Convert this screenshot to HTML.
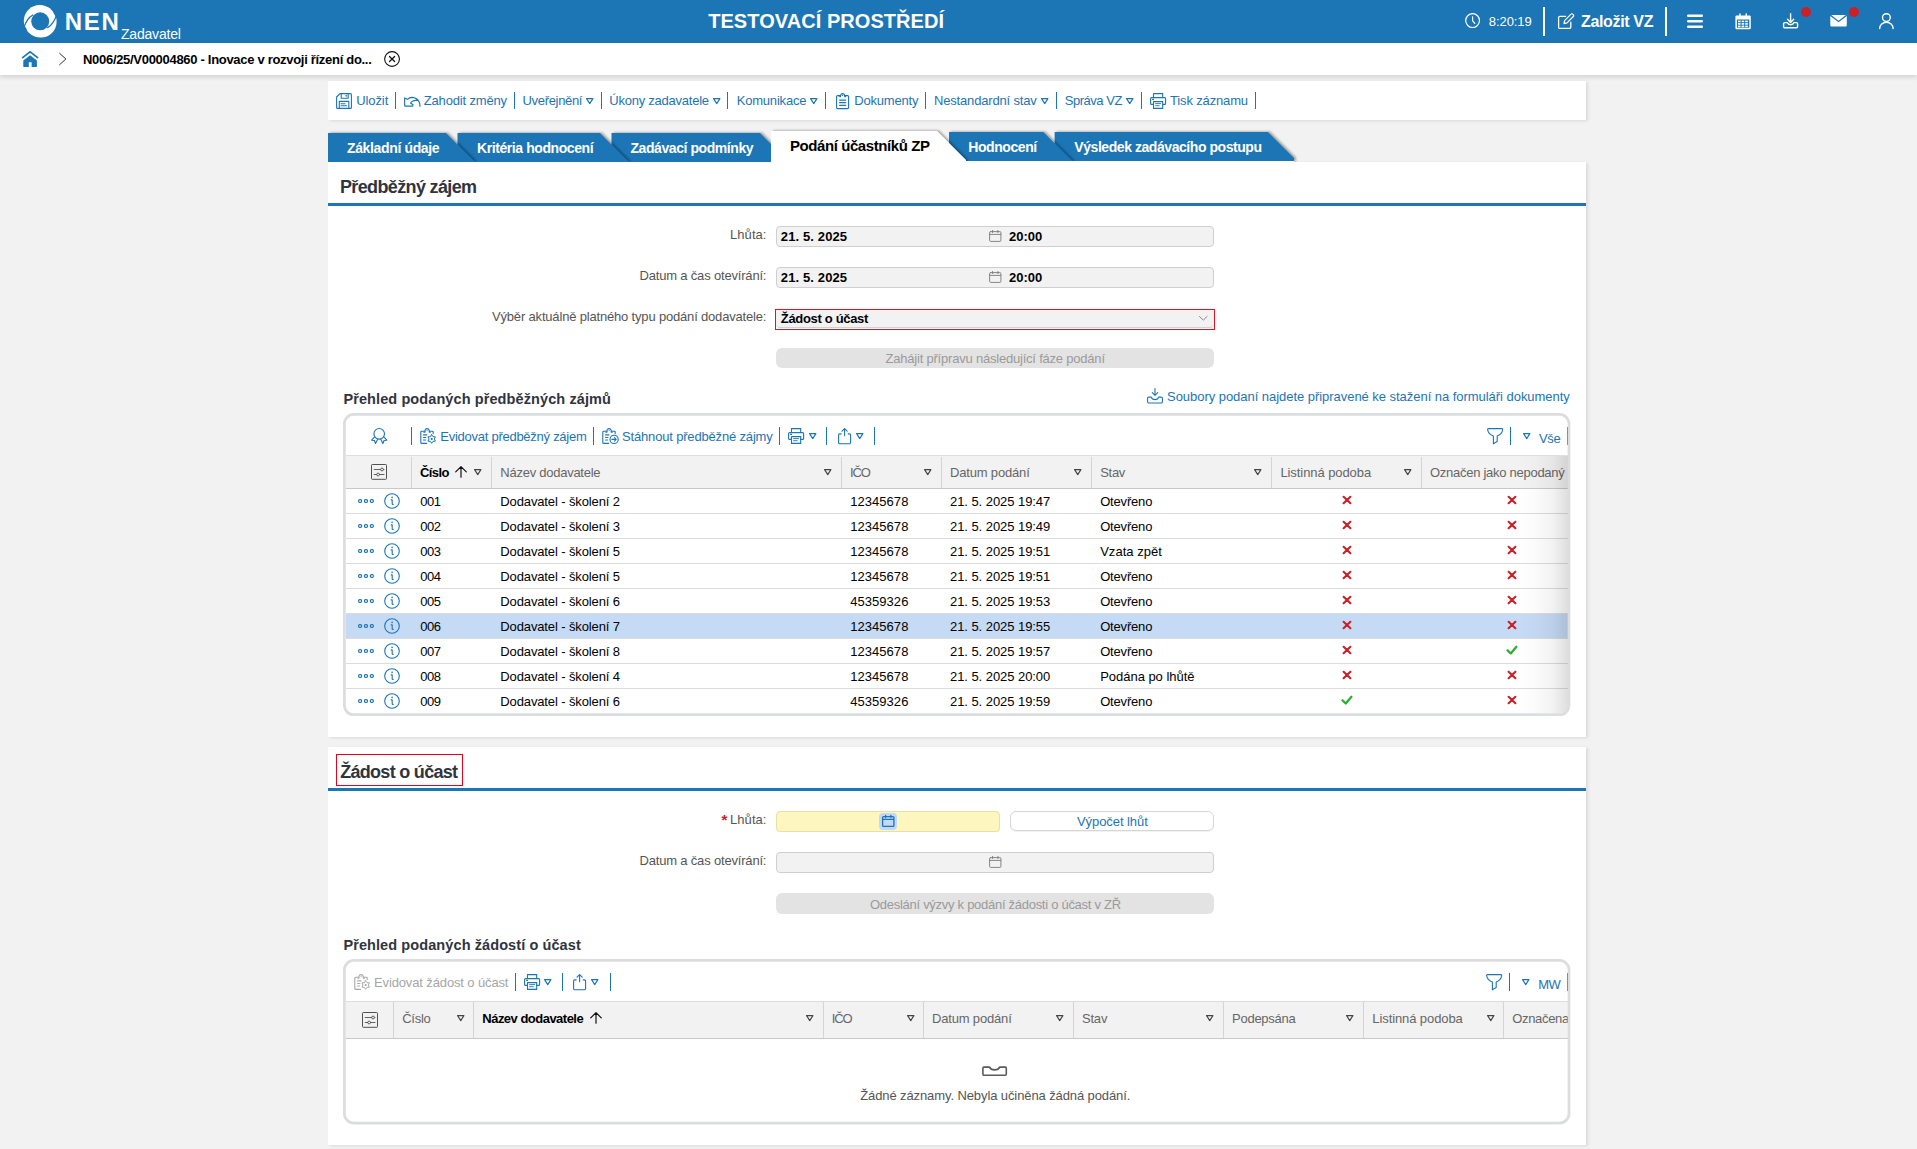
<!DOCTYPE html>
<html lang="cs"><head><meta charset="utf-8"><title>NEN - Zadavatel</title>
<style>
html,body{margin:0;padding:0}
body{width:1917px;height:1149px;overflow:hidden;background:#f2f2f2;font-family:"Liberation Sans", sans-serif;font-size:13px;position:relative}
div,.t,svg.i{position:absolute;box-sizing:border-box}
.t{white-space:nowrap;line-height:20px;height:20px;display:block;margin:0;padding:0;font-size:13px;font-weight:400;color:#000;text-decoration:none}
svg.i{overflow:visible}
.panel{background:#fff;box-shadow:2px 1px 3px rgba(0,0,0,.10)}
.sep{background:#1c75b4}
.fld{background:#f2f2f2;border:1px solid #cfcfcf;border-radius:4px}
.btnd{background:#e3e3e3;border-radius:6px}
.grid{border:3px solid #dcdddf;border-radius:11px;background:#fff;overflow:hidden}
.gh{background:#f2f2f2;border-top:1px solid #dedede;border-bottom:1px solid #c9c9c9}
.cs{background:#d4d4d4;width:1px}
.rl{background:#dcdcdc;height:1px}
</style></head>
<body>
<header>
<div class="hdr" style="left:0px;top:0px;width:1917px;height:43px;background:#1c75b4"></div>
<div class="crumb" style="left:0px;top:43px;width:1917px;height:32px;background:#fff;box-shadow:0 2px 5px rgba(0,0,0,.14)"></div>
<svg class="i" style="left:23.8px;top:4.7px;" width="33" height="33" viewBox="0 0 33 33"><circle cx="15.7" cy="15.9" r="15.9" fill="#fff"/><circle cx="16.7" cy="16.7" r="15.9" fill="#fff"/><circle cx="16.2" cy="16.3" r="9" fill="#1c75b4"/><path d="M-0.5 23.5 Q3.0 13.0 8.8 10.0" fill="none" stroke="#1c75b4" stroke-width="1.35" stroke-linecap="round" stroke-linejoin="round" /><path d="M-1 20.4 L1.0 21.4 L3.3 25.6 L-1 27 Z" fill="#1c75b4"/><g transform="rotate(180 16.2 16.3)"><path d="M-0.5 23.5 Q3.0 13.0 8.8 10.0" fill="none" stroke="#1c75b4" stroke-width="1.35" stroke-linecap="round" stroke-linejoin="round" /><path d="M-1 20.4 L1.0 21.4 L3.3 25.6 L-1 27 Z" fill="#1c75b4"/></g></svg>
<svg class="i" style="left:22px;top:50.8px;" width="17" height="17" viewBox="0 0 17 17"><path d="M0.6 6.6 L8.1 0.9 L15.6 6.6" fill="none" stroke="#1c75b4" stroke-width="1.7" stroke-linecap="round" stroke-linejoin="miter"/><path d="M8.1 4.2 L14.9 9.6 V15.4 a0.5 0.5 0 0 1 -0.5 0.5 H9.6 V11.2 H6.8 V15.9 H1.8 a0.5 0.5 0 0 1 -0.5 -0.5 V9.6 Z" fill="#1c75b4"/></svg>
<svg class="i" style="left:59px;top:53px;" width="8" height="12" viewBox="0 0 8 12"><path d="M0.6 0.3 L6.9 6 L0.6 11.7" fill="none" stroke="#333" stroke-width="1" stroke-linecap="round" stroke-linejoin="round" /></svg>
<svg class="i" style="left:383.8px;top:50.8px;" width="17" height="17" viewBox="0 0 17 17"><circle cx="8.05" cy="8" r="7.4" fill="none" stroke="#111" stroke-width="1.1"/><path d="M5.5 5.5 L10.6 10.5 M10.6 5.5 L5.5 10.5" fill="none" stroke="#111" stroke-width="1.25" stroke-linecap="round" stroke-linejoin="round" /></svg>
<svg class="i" style="left:1465px;top:12.9px;" width="16" height="16" viewBox="0 0 16 16"><circle cx="7.6" cy="7.6" r="6.9" fill="none" stroke="#fff" stroke-width="1.2"/><path d="M7.6 3.8 V7.8 L9.8 10.4" fill="none" stroke="#fff" stroke-width="1.2" stroke-linecap="round" stroke-linejoin="round" /></svg>
<svg class="i" style="left:1557.5px;top:12.5px;" width="17" height="17" viewBox="0 0 17 17"><path d="M7.5 3.4 H1.8 a1.2 1.2 0 0 0 -1.2 1.2 V14.2 a1.2 1.2 0 0 0 1.2 1.2 H11.6 a1.2 1.2 0 0 0 1.2 -1.2 V9.2" fill="none" stroke="#fff" stroke-width="1.3" stroke-linecap="round" stroke-linejoin="round" /><path d="M6 10.6 L6.6 7.6 L13 1.2 a1.2 1.2 0 0 1 1.8 0 L15.3 1.7 a1.2 1.2 0 0 1 0 1.8 L9 9.9 Z" fill="none" stroke="#fff" stroke-width="1.2" stroke-linecap="round" stroke-linejoin="round" /></svg>
<svg class="i" style="left:1687px;top:14px;" width="16" height="15" viewBox="0 0 16 15"><rect x="0" y="0.4" width="16" height="2.5" rx="1.2" fill="#fff"/><rect x="0" y="5.9" width="16" height="2.5" rx="1.2" fill="#fff"/><rect x="0" y="11.4" width="16" height="2.5" rx="1.2" fill="#fff"/></svg>
<svg class="i" style="left:1734.5px;top:12.5px;" width="17" height="17" viewBox="0 0 17 17"><path d="M1.6 2.6 H14.6 a1.2 1.2 0 0 1 1.2 1.2 V15 a1.2 1.2 0 0 1 -1.2 1.2 H1.6 A1.2 1.2 0 0 1 0.4 15 V3.8 A1.2 1.2 0 0 1 1.6 2.6 Z M1.9 6.6 V14.7 H14.3 V6.6 Z" fill="#fff" fill-rule="evenodd"/><rect x="4.2" y="0.2" width="1.5" height="4" rx="0.7" fill="#fff"/><rect x="10.5" y="0.2" width="1.5" height="4" rx="0.7" fill="#fff"/><rect x="3.0" y="7.6" width="2.6" height="1.6" fill="#fff"/><rect x="3.0" y="10.1" width="2.6" height="1.6" fill="#fff"/><rect x="3.0" y="12.6" width="2.6" height="1.6" fill="#fff"/><rect x="6.6" y="7.6" width="2.6" height="1.6" fill="#fff"/><rect x="6.6" y="10.1" width="2.6" height="1.6" fill="#fff"/><rect x="6.6" y="12.6" width="2.6" height="1.6" fill="#fff"/><rect x="10.2" y="7.6" width="2.6" height="1.6" fill="#fff"/><rect x="10.2" y="10.1" width="2.6" height="1.6" fill="#fff"/><rect x="10.2" y="12.6" width="2.6" height="1.6" fill="#fff"/></svg>
<svg class="i" style="left:1783px;top:13px;" width="16" height="16" viewBox="0 0 16 16"><path d="M7.6 0.7 V9.2 M4.5 6.3 L7.6 9.4 L10.7 6.3" fill="none" stroke="#fff" stroke-width="1.4" stroke-linecap="round" stroke-linejoin="round" /><path d="M1.8 9.6 H4.2 a3.6 3.2 0 0 0 6.8 0 H13.4 a1.2 1.2 0 0 1 1.2 1.2 V13.6 a1.2 1.2 0 0 1 -1.2 1.2 H1.8 a1.2 1.2 0 0 1 -1.2 -1.2 V10.8 a1.2 1.2 0 0 1 1.2 -1.2 Z" fill="none" stroke="#fff" stroke-width="1.4" stroke-linecap="round" stroke-linejoin="round" /></svg>
<div style="left:1800.7px;top:7px;width:10px;height:10px;background:#cb2026;border-radius:50%"></div>
<svg class="i" style="left:1829.7px;top:15px;" width="18" height="12" viewBox="0 0 18 12"><path d="M0.3 1 L8.55 7.2 L16.8 1 V10.3 a1.2 1.2 0 0 1 -1.2 1.2 H1.5 a1.2 1.2 0 0 1 -1.2 -1.2 Z" fill="#fff"/><path d="M1.2 0 H15.9 L8.55 5.7 Z" fill="#fff"/></svg>
<div style="left:1848.6px;top:7px;width:10px;height:10px;background:#cb2026;border-radius:50%"></div>
<svg class="i" style="left:1879px;top:13px;" width="16" height="17" viewBox="0 0 16 17"><circle cx="7.4" cy="4.6" r="3.9" fill="none" stroke="#fff" stroke-width="1.4"/><path d="M0.7 15.6 a6.7 6.4 0 0 1 13.4 0" fill="none" stroke="#fff" stroke-width="1.4" stroke-linecap="round" stroke-linejoin="round" /></svg>
<span class="t" style="left:64.80px;top:12px;font-size:24px;font-weight:700;color:#fff;letter-spacing:1.634px;">NEN</span>
<span class="t" style="left:121.00px;top:24px;font-size:14px;color:#fff;letter-spacing:-0.206px;">Zadavatel</span>
<h1 class="t" style="left:708.20px;top:11px;font-size:20px;font-weight:700;color:#fff;letter-spacing:0.053px;">TESTOVACÍ PROSTŘEDÍ</h1>
<span class="t" style="left:1488.75px;top:12px;color:#fff;letter-spacing:-0.058px;">8:20:19</span>
<div style="left:1543px;top:7px;width:2px;height:29px;background:#fff"></div>
<span class="t" style="left:1581.00px;top:12px;font-size:16px;font-weight:700;color:#fff;letter-spacing:-0.345px;">Založit VZ</span>
<div style="left:1665px;top:7px;width:2px;height:29px;background:#fff"></div>
<span class="t" style="left:83.00px;top:50px;font-weight:700;letter-spacing:-0.300px;">N006/25/V00004860 - Inovace v rozvoji řízení do...</span>
</header>
<main>
<nav class="toolbar">
<div class="panel" style="left:328px;top:81px;width:1258px;height:39px;"></div>
<svg class="i" style="left:336.2px;top:93px;" width="16" height="16" viewBox="0 0 16 16"><path d="M4 0.6 H14.4 a1 1 0 0 1 1 1 V14.4 a1 1 0 0 1 -1 1 H1.6 a1 1 0 0 1 -1 -1 V4 Z" fill="none" stroke="#1c75b4" stroke-width="1.1" stroke-linecap="round" stroke-linejoin="round" /><path d="M5.2 0.6 V5.2 H12.2 V0.6 M3.3 15.4 V8.4 H12.8 V15.4 M5 10.7 H9 M5 12.8 H10.6" fill="none" stroke="#1c75b4" stroke-width="1.1" stroke-linecap="round" stroke-linejoin="round" /><path d="M10.2 2.2 V3.3" fill="none" stroke="#1c75b4" stroke-width="1.1" stroke-linecap="round" stroke-linejoin="round" /></svg>
<svg class="i" style="left:403.7px;top:97px;" width="17" height="10" viewBox="0 0 17 10"><path d="M13.4 3.5 Q11 3.2 9 3.9 Q7.5 4.6 6.5 6 L9 7.65 L8.7 9.05 H1.3 Q0.66 9.05 0.66 8.4 V0.9 L3.44 2.36 Q5.5 0.5 7.9 0.4 Q13 0.6 15.2 5 Q16 7 16 9.3" fill="none" stroke="#1c75b4" stroke-width="1.15" stroke-linecap="round" stroke-linejoin="round" /></svg>
<svg class="i" style="left:835.8px;top:92.7px;" width="14" height="17" viewBox="0 0 14 17"><path d="M4.6 2.6 H1.6 a1 1 0 0 0 -1 1 V14.6 a1 1 0 0 0 1 1 H11.6 a1 1 0 0 0 1 -1 V3.6 a1 1 0 0 0 -1 -1 H8.6" fill="none" stroke="#1c75b4" stroke-width="1.1" stroke-linecap="round" stroke-linejoin="round" /><path d="M3.6 3.6 H4.6 Q4.4 0.6 6.6 0.6 Q8.8 0.6 8.6 3.6 H9.6" fill="none" stroke="#1c75b4" stroke-width="1.1" stroke-linecap="round" stroke-linejoin="round" /><circle cx="6.6" cy="2.4" r="0.6" fill="#1c75b4"/><path d="M3.6 7.1 H9.6 M3.6 9.7 H9.6 M3.6 12.3 H9.6" fill="none" stroke="#1c75b4" stroke-width="1.3" stroke-linecap="round" stroke-linejoin="round" stroke-linecap="butt"/></svg>
<svg class="i" style="left:1150px;top:93px;" width="16" height="16" viewBox="0 0 16 16"><path d="M3.5 4.6 V0.6 H12.7 V4.6" fill="none" stroke="#1c75b4" stroke-width="1.1" stroke-linecap="round" stroke-linejoin="round" /><path d="M3.5 11.4 H1.6 a1 1 0 0 1 -1 -1 V5.6 a1 1 0 0 1 1 -1 H14.6 a1 1 0 0 1 1 1 V10.4 a1 1 0 0 1 -1 1 H12.7" fill="none" stroke="#1c75b4" stroke-width="1.1" stroke-linecap="round" stroke-linejoin="round" /><path d="M3.5 8.6 H12.7 V15.4 H3.5 Z" fill="none" stroke="#1c75b4" stroke-width="1.1" stroke-linecap="round" stroke-linejoin="round" /><path d="M5.6 10.6 H10.6 M5.6 12.7 H9.2" fill="none" stroke="#1c75b4" stroke-width="0.9" stroke-linecap="round" stroke-linejoin="round" stroke-linecap="butt"/><path d="M2.6 6.4 H3.6" fill="none" stroke="#1c75b4" stroke-width="1.1" stroke-linecap="round" stroke-linejoin="round" /></svg>
<a class="t" style="left:356.25px;top:91px;color:#1c75b4;letter-spacing:-0.097px;">Uložit</a>
<div class="sep" style="left:395px;top:92px;width:1.2px;height:17px;"></div>
<a class="t" style="left:423.75px;top:91px;color:#1c75b4;letter-spacing:-0.165px;">Zahodit změny</a>
<div class="sep" style="left:514px;top:92px;width:1.2px;height:17px;"></div>
<a class="t" style="left:522.50px;top:91px;color:#1c75b4;letter-spacing:-0.322px;">Uveřejnění</a>
<svg class="i" style="left:585.7px;top:97.5px;" width="8" height="7" viewBox="0 0 8 7"><path d="M0.6 0.6 H6.9 L3.75 5.6 Z" fill="none" stroke="#1c75b4" stroke-width="1.15" stroke-linecap="round" stroke-linejoin="round" /></svg>
<div class="sep" style="left:601px;top:92px;width:1.2px;height:17px;"></div>
<a class="t" style="left:609.30px;top:91px;color:#1c75b4;letter-spacing:-0.238px;">Úkony zadavatele</a>
<svg class="i" style="left:712.7px;top:97.5px;" width="8" height="7" viewBox="0 0 8 7"><path d="M0.6 0.6 H6.9 L3.75 5.6 Z" fill="none" stroke="#1c75b4" stroke-width="1.15" stroke-linecap="round" stroke-linejoin="round" /></svg>
<div class="sep" style="left:727px;top:92px;width:1.2px;height:17px;"></div>
<a class="t" style="left:736.70px;top:91px;color:#1c75b4;letter-spacing:-0.196px;">Komunikace</a>
<svg class="i" style="left:810px;top:97.5px;" width="8" height="7" viewBox="0 0 8 7"><path d="M0.6 0.6 H6.9 L3.75 5.6 Z" fill="none" stroke="#1c75b4" stroke-width="1.15" stroke-linecap="round" stroke-linejoin="round" /></svg>
<div class="sep" style="left:825px;top:92px;width:1.2px;height:17px;"></div>
<a class="t" style="left:854.30px;top:91px;color:#1c75b4;letter-spacing:-0.196px;">Dokumenty</a>
<div class="sep" style="left:925px;top:92px;width:1.2px;height:17px;"></div>
<a class="t" style="left:934.00px;top:91px;color:#1c75b4;letter-spacing:-0.171px;">Nestandardní stav</a>
<svg class="i" style="left:1040.7px;top:97.5px;" width="8" height="7" viewBox="0 0 8 7"><path d="M0.6 0.6 H6.9 L3.75 5.6 Z" fill="none" stroke="#1c75b4" stroke-width="1.15" stroke-linecap="round" stroke-linejoin="round" /></svg>
<div class="sep" style="left:1056px;top:92px;width:1.2px;height:17px;"></div>
<a class="t" style="left:1064.70px;top:91px;color:#1c75b4;letter-spacing:-0.468px;">Správa VZ</a>
<svg class="i" style="left:1126.3px;top:97.5px;" width="8" height="7" viewBox="0 0 8 7"><path d="M0.6 0.6 H6.9 L3.75 5.6 Z" fill="none" stroke="#1c75b4" stroke-width="1.15" stroke-linecap="round" stroke-linejoin="round" /></svg>
<div class="sep" style="left:1141px;top:92px;width:1.2px;height:17px;"></div>
<a class="t" style="left:1170.00px;top:91px;color:#1c75b4;letter-spacing:-0.149px;">Tisk záznamu</a>
<div class="sep" style="left:1255px;top:92px;width:1.2px;height:17px;"></div>
</nav>
<section class="predbezny-zajem">
<div class="panel p1" style="left:328px;top:162px;width:1258px;height:575px;"></div>
<svg class="i" style="left:0;top:120px;overflow:hidden" width="1917" height="42" viewBox="0 120 1917 42"><defs><filter id="ts" x="-10%" y="-40%" width="120%" height="180%"><feDropShadow dx="2" dy="-0.5" stdDeviation="1.15" flood-color="#000" flood-opacity=".34"/></filter></defs><path d="M1054.6 132 H1268 L1294 158 V162 H1054.6 Z" fill="#1c75b4" filter="url(#ts)"/><path d="M949 132 H1043.4 L1073.4 162 H949 Z" fill="#1c75b4" filter="url(#ts)"/><path d="M611.5 133 H760 L789 162 H611.5 Z" fill="#1c75b4" filter="url(#ts)"/><path d="M457.5 133 H600 L629 162 H457.5 Z" fill="#1c75b4" filter="url(#ts)"/><path d="M328 133 H446 L475 162 H328 Z" fill="#1c75b4" filter="url(#ts)"/><path d="M771 131 H937 L966 160 V162 H771 Z" fill="#fff" filter="url(#ts)"/></svg>
<div style="left:966px;top:161px;width:328px;height:1px;background:#fff"></div>
<span class="t" style="left:347.00px;top:138px;font-size:14px;font-weight:700;color:#fff;letter-spacing:-0.358px;">Základní údaje</span>
<span class="t" style="left:477.00px;top:138px;font-size:14px;font-weight:700;color:#fff;letter-spacing:-0.420px;">Kritéria hodnocení</span>
<span class="t" style="left:630.50px;top:138px;font-size:14px;font-weight:700;color:#fff;letter-spacing:-0.431px;">Zadávací podmínky</span>
<span class="t" style="left:790.00px;top:136px;font-size:15px;font-weight:700;letter-spacing:-0.424px;">Podání účastníků ZP</span>
<span class="t" style="left:968.20px;top:137px;font-size:14px;font-weight:700;color:#fff;letter-spacing:-0.413px;">Hodnocení</span>
<span class="t" style="left:1074.30px;top:137px;font-size:14px;font-weight:700;color:#fff;letter-spacing:-0.440px;">Výsledek zadávacího postupu</span>
<h2 class="t" style="left:340.00px;top:177px;font-size:18px;font-weight:700;color:#2f343e;letter-spacing:-0.642px;">Předběžný zájem</h2>
<div style="left:328px;top:203px;width:1258px;height:3px;background:#1c75b4"></div>
<label class="t" style="left:730.00px;top:225px;color:#555;letter-spacing:0.065px;">Lhůta:</label>
<div class="fld" style="left:776px;top:226px;width:438px;height:21px;"></div>
<span class="t" style="left:780.80px;top:227px;font-weight:700;letter-spacing:0.122px;">21. 5. 2025</span>
<svg class="i" style="left:989px;top:230px;" width="13" height="12" viewBox="0 0 13 12"><path d="M1.6 1.6 H10.9 a1 1 0 0 1 1 1 V10.4 a1 1 0 0 1 -1 1 H1.6 a1 1 0 0 1 -1 -1 V2.6 a1 1 0 0 1 1 -1 Z M0.6 4.4 H11.9 M3.6 0.4 V2.6 M8.9 0.4 V2.6" fill="none" stroke="#808080" stroke-width="0.95" stroke-linecap="round" stroke-linejoin="round" /></svg>
<span class="t" style="left:1009.00px;top:227px;font-weight:700;letter-spacing:-0.017px;">20:00</span>
<label class="t" style="left:639.50px;top:266px;color:#555;letter-spacing:-0.181px;">Datum a čas otevírání:</label>
<div class="fld" style="left:776px;top:267px;width:438px;height:21px;"></div>
<span class="t" style="left:780.80px;top:268px;font-weight:700;letter-spacing:0.122px;">21. 5. 2025</span>
<svg class="i" style="left:989px;top:271px;" width="13" height="12" viewBox="0 0 13 12"><path d="M1.6 1.6 H10.9 a1 1 0 0 1 1 1 V10.4 a1 1 0 0 1 -1 1 H1.6 a1 1 0 0 1 -1 -1 V2.6 a1 1 0 0 1 1 -1 Z M0.6 4.4 H11.9 M3.6 0.4 V2.6 M8.9 0.4 V2.6" fill="none" stroke="#808080" stroke-width="0.95" stroke-linecap="round" stroke-linejoin="round" /></svg>
<span class="t" style="left:1009.00px;top:268px;font-weight:700;letter-spacing:-0.017px;">20:00</span>
<label class="t" style="left:492.00px;top:307px;color:#555;letter-spacing:-0.177px;">Výběr aktuálně platného typu podání dodavatele:</label>
<div style="left:775px;top:309px;width:440px;height:21px;border:1px solid #e8101e;background:#fff"></div>
<div style="left:776px;top:310px;width:438px;height:18px;background:#f2f2f2;border-bottom:1px solid #d2d2d2;border-radius:0 0 4px 4px"></div>
<span class="t" style="left:780.80px;top:309px;font-weight:700;letter-spacing:-0.321px;">Žádost o účast</span>
<svg class="i" style="left:1199.4px;top:315.9px;" width="9" height="6" viewBox="0 0 9 6"><path d="M0.5 0.5 L4.3 4.1 L8.1 0.5" fill="none" stroke="#8a8a8a" stroke-width="1" stroke-linecap="round" stroke-linejoin="round" /></svg>
<div class="btnd" style="left:776px;top:348px;width:438px;height:20px;"></div>
<span class="t" style="left:885.50px;top:349px;color:#9a9a9a;letter-spacing:-0.209px;">Zahájit přípravu následující fáze podání</span>
<h3 class="t" style="left:343.40px;top:389px;font-size:14.5px;font-weight:700;color:#2f343e;letter-spacing:0.097px;">Přehled podaných předběžných zájmů</h3>
<svg class="i" style="left:1147px;top:388.3px;" width="17" height="16" viewBox="0 0 17 16"><path d="M8 0.5 V7.2 M5.3 4.7 L8 7.4 L10.7 4.7" fill="none" stroke="#1c75b4" stroke-width="1.1" stroke-linecap="round" stroke-linejoin="round" /><path d="M1.8 9.1 H4.3 Q5 11.6 8 11.6 Q11 11.6 11.7 9.1 H14.2 a1.2 1.2 0 0 1 1.2 1.2 V13.8 a1.2 1.2 0 0 1 -1.2 1.2 H1.8 a1.2 1.2 0 0 1 -1.2 -1.2 V10.3 a1.2 1.2 0 0 1 1.2 -1.2 Z" fill="none" stroke="#1c75b4" stroke-width="1.1" stroke-linecap="round" stroke-linejoin="round" /></svg>
<a class="t" style="left:1167.00px;top:387px;color:#1c75b4;letter-spacing:-0.040px;">Soubory podaní najdete připravené ke stažení na formuláři dokumenty</a>
<div class="gh" style="left:346px;top:455px;width:1222px;height:34px;"></div>
<div class="sep" style="left:411px;top:427px;width:1.2px;height:18px;"></div>
<svg class="i" style="left:371px;top:428px;" width="17" height="17" viewBox="0 0 17 17"><circle cx="8.2" cy="5.8" r="5.3" fill="none" stroke="#1c75b4" stroke-width="1.1"/><path d="M3.4 9.2 L0.6 12.2 L3.4 12.5 L4.5 15.6 L6.8 11" fill="none" stroke="#1c75b4" stroke-width="1.1" stroke-linecap="round" stroke-linejoin="round" /><path d="M13 9.2 L15.8 12.2 L13 12.5 L11.9 15.6 L9.6 11" fill="none" stroke="#1c75b4" stroke-width="1.1" stroke-linecap="round" stroke-linejoin="round" /></svg>
<svg class="i" style="left:419.7px;top:428px;" width="17" height="17" viewBox="0 0 17 17"><path d="M4.8 3.2 H1.8 a1 1 0 0 0 -1 1 V14.4 a1 1 0 0 0 1 1 H6.6 M9.4 3.2 H12.2 a1 1 0 0 1 1 1 V5.6" fill="none" stroke="#1c75b4" stroke-width="1.1" stroke-linecap="round" stroke-linejoin="round" /><path d="M3.9 4.2 H4.9 Q4.7 0.6 7.1 0.6 Q9.5 0.6 9.3 4.2 H10.3" fill="none" stroke="#1c75b4" stroke-width="1.1" stroke-linecap="round" stroke-linejoin="round" /><circle cx="7.1" cy="2.6" r="0.55" fill="#1c75b4"/><path d="M3.6 6.9 H6.8" fill="none" stroke="#1c75b4" stroke-width="1.3" stroke-linecap="round" stroke-linejoin="round" stroke-linecap="butt"/><path d="M3.6 9.5 H5.8 M3.6 12 H5.6" fill="none" stroke="#1c75b4" stroke-width="1.2" stroke-linecap="round" stroke-linejoin="round" stroke-linecap="butt"/><path d="M11.70 6.70 L13.05 8.66 L15.42 8.85 L14.40 11.00 L15.42 13.15 L13.05 13.34 L11.70 15.30 L10.35 13.34 L7.98 13.15 L9.00 11.00 L7.98 8.85 L10.35 8.66 Z" fill="none" stroke="#1c75b4" stroke-width="1.0" stroke-linecap="round" stroke-linejoin="round" /><circle cx="11.7" cy="11" r="1.1" fill="#1c75b4"/></svg>
<a class="t" style="left:440.30px;top:427px;color:#1c75b4;letter-spacing:-0.261px;">Evidovat předběžný zájem</a>
<div class="sep" style="left:593px;top:427px;width:1.2px;height:18px;"></div>
<svg class="i" style="left:601.7px;top:428px;" width="17" height="17" viewBox="0 0 17 17"><path d="M4.8 3.2 H1.8 a1 1 0 0 0 -1 1 V14.4 a1 1 0 0 0 1 1 H6.6 M9.4 3.2 H12.2 a1 1 0 0 1 1 1 V5.6" fill="none" stroke="#1c75b4" stroke-width="1.1" stroke-linecap="round" stroke-linejoin="round" /><path d="M3.9 4.2 H4.9 Q4.7 0.6 7.1 0.6 Q9.5 0.6 9.3 4.2 H10.3" fill="none" stroke="#1c75b4" stroke-width="1.1" stroke-linecap="round" stroke-linejoin="round" /><circle cx="7.1" cy="2.6" r="0.55" fill="#1c75b4"/><path d="M3.6 6.9 H6.8" fill="none" stroke="#1c75b4" stroke-width="1.3" stroke-linecap="round" stroke-linejoin="round" stroke-linecap="butt"/><path d="M3.6 9.5 H5.8 M3.6 12 H5.6" fill="none" stroke="#1c75b4" stroke-width="1.2" stroke-linecap="round" stroke-linejoin="round" stroke-linecap="butt"/><circle cx="12.1" cy="11.4" r="4.1" fill="none" stroke="#1c75b4" stroke-width="1.1"/><path d="M9.9 11.4 H14 M12.5 9.7 L14.2 11.4 L12.5 13.1" fill="none" stroke="#1c75b4" stroke-width="1.1" stroke-linecap="round" stroke-linejoin="round" /></svg>
<a class="t" style="left:622.00px;top:427px;color:#1c75b4;letter-spacing:-0.169px;">Stáhnout předběžné zájmy</a>
<div class="sep" style="left:779px;top:427px;width:1.2px;height:18px;"></div>
<svg class="i" style="left:788px;top:428px;" width="16" height="16" viewBox="0 0 16 16"><path d="M3.5 4.6 V0.6 H12.7 V4.6" fill="none" stroke="#1c75b4" stroke-width="1.1" stroke-linecap="round" stroke-linejoin="round" /><path d="M3.5 11.4 H1.6 a1 1 0 0 1 -1 -1 V5.6 a1 1 0 0 1 1 -1 H14.6 a1 1 0 0 1 1 1 V10.4 a1 1 0 0 1 -1 1 H12.7" fill="none" stroke="#1c75b4" stroke-width="1.1" stroke-linecap="round" stroke-linejoin="round" /><path d="M3.5 8.6 H12.7 V15.4 H3.5 Z" fill="none" stroke="#1c75b4" stroke-width="1.1" stroke-linecap="round" stroke-linejoin="round" /><path d="M5.6 10.6 H10.6 M5.6 12.7 H9.2" fill="none" stroke="#1c75b4" stroke-width="0.9" stroke-linecap="round" stroke-linejoin="round" stroke-linecap="butt"/><path d="M2.6 6.4 H3.6" fill="none" stroke="#1c75b4" stroke-width="1.1" stroke-linecap="round" stroke-linejoin="round" /></svg>
<svg class="i" style="left:808.5px;top:433px;" width="8" height="7" viewBox="0 0 8 7"><path d="M0.6 0.6 H6.9 L3.75 5.6 Z" fill="none" stroke="#1c75b4" stroke-width="1.15" stroke-linecap="round" stroke-linejoin="round" /></svg>
<div class="sep" style="left:826px;top:427px;width:1.2px;height:18px;"></div>
<svg class="i" style="left:837.5px;top:427.5px;" width="14" height="17" viewBox="0 0 14 17"><path d="M3.2 5.9 H1.8 a1.2 1.2 0 0 0 -1.2 1.2 V14.6 a1.2 1.2 0 0 0 1.2 1.2 H11.4 a1.2 1.2 0 0 0 1.2 -1.2 V7.1 a1.2 1.2 0 0 0 -1.2 -1.2 H10.2" fill="none" stroke="#1c75b4" stroke-width="1.1" stroke-linecap="round" stroke-linejoin="round" /><path d="M6.6 0.7 V7.8 M4 3.2 L6.6 0.6 L9.2 3.2" fill="none" stroke="#1c75b4" stroke-width="1.1" stroke-linecap="round" stroke-linejoin="round" /></svg>
<svg class="i" style="left:855.5px;top:433px;" width="8" height="7" viewBox="0 0 8 7"><path d="M0.6 0.6 H6.9 L3.75 5.6 Z" fill="none" stroke="#1c75b4" stroke-width="1.15" stroke-linecap="round" stroke-linejoin="round" /></svg>
<div class="sep" style="left:874px;top:427px;width:1.2px;height:18px;"></div>
<svg class="i" style="left:1487px;top:428px;" width="17" height="17" viewBox="0 0 17 17"><path d="M1.4 0.6 H14.9 a0.8 0.8 0 0 1 0.8 0.9 Q15.2 6 10.2 8 V13.6 L6.4 15.8 V8 Q1.2 6 0.6 1.5 a0.8 0.8 0 0 1 0.8 -0.9 Z" fill="none" stroke="#1c75b4" stroke-width="1.1" stroke-linecap="round" stroke-linejoin="round" /></svg>
<div class="sep" style="left:1510px;top:427px;width:1.2px;height:18px;"></div>
<svg class="i" style="left:1523.4px;top:433px;" width="8" height="7" viewBox="0 0 8 7"><path d="M0.6 0.6 H6.9 L3.75 5.6 Z" fill="none" stroke="#1c75b4" stroke-width="1.15" stroke-linecap="round" stroke-linejoin="round" /></svg>
<a class="t" style="left:1539.00px;top:429px;color:#1c75b4;letter-spacing:-0.313px;">Vše</a>
<div class="sep" style="left:1567px;top:427px;width:1.2px;height:18px;"></div>
<svg class="i" style="left:370.6px;top:464px;" width="17" height="16" viewBox="0 0 17 16"><rect x="0.5" y="0.5" width="15" height="14.8" rx="0.8" fill="none" stroke="#505050" stroke-width="1"/><path d="M3.2 5.5 H9.4 M12.6 5.5 H13" fill="none" stroke="#505050" stroke-width="0.9" stroke-linecap="round" stroke-linejoin="round" /><circle cx="11" cy="5.5" r="1.4" fill="none" stroke="#505050" stroke-width="0.9"/><path d="M3.2 10.5 H5.6 M8.6 10.5 H13" fill="none" stroke="#505050" stroke-width="0.9" stroke-linecap="round" stroke-linejoin="round" /><circle cx="7.1" cy="10.5" r="1.4" fill="none" stroke="#505050" stroke-width="0.9"/></svg>
<div class="cs" style="left:411.0px;top:457px;width:1px;height:31px;"></div>
<div class="cs" style="left:491.0px;top:457px;width:1px;height:31px;"></div>
<div class="cs" style="left:841.0px;top:457px;width:1px;height:31px;"></div>
<div class="cs" style="left:941.0px;top:457px;width:1px;height:31px;"></div>
<div class="cs" style="left:1091.0px;top:457px;width:1px;height:31px;"></div>
<div class="cs" style="left:1271.0px;top:457px;width:1px;height:31px;"></div>
<div class="cs" style="left:1421.0px;top:457px;width:1px;height:31px;"></div>
<span class="t" style="left:420.00px;top:463px;font-weight:700;letter-spacing:-0.604px;">Číslo</span>
<svg class="i" style="left:455px;top:465.6px;" width="13" height="12" viewBox="0 0 13 12"><path d="M6 0.7 V11.2 M0.7 5.9 L6 0.6 L11.3 5.9" fill="none" stroke="#111" stroke-width="1.2" stroke-linecap="round" stroke-linejoin="round" /></svg>
<svg class="i" style="left:474px;top:469px;" width="8" height="7" viewBox="0 0 8 7"><path d="M0.6 0.6 H6.9 L3.75 5.6 Z" fill="none" stroke="#444" stroke-width="1.15" stroke-linecap="round" stroke-linejoin="round" /></svg>
<span class="t" style="left:500.30px;top:463px;color:#666;letter-spacing:-0.253px;">Název dodavatele</span>
<svg class="i" style="left:824px;top:469px;" width="8" height="7" viewBox="0 0 8 7"><path d="M0.6 0.6 H6.9 L3.75 5.6 Z" fill="none" stroke="#444" stroke-width="1.15" stroke-linecap="round" stroke-linejoin="round" /></svg>
<span class="t" style="left:850.00px;top:463px;color:#666;letter-spacing:-1.173px;">IČO</span>
<svg class="i" style="left:924.3px;top:469px;" width="8" height="7" viewBox="0 0 8 7"><path d="M0.6 0.6 H6.9 L3.75 5.6 Z" fill="none" stroke="#444" stroke-width="1.15" stroke-linecap="round" stroke-linejoin="round" /></svg>
<span class="t" style="left:950.00px;top:463px;color:#666;letter-spacing:-0.172px;">Datum podání</span>
<svg class="i" style="left:1074px;top:469px;" width="8" height="7" viewBox="0 0 8 7"><path d="M0.6 0.6 H6.9 L3.75 5.6 Z" fill="none" stroke="#444" stroke-width="1.15" stroke-linecap="round" stroke-linejoin="round" /></svg>
<span class="t" style="left:1100.20px;top:463px;color:#666;letter-spacing:-0.279px;">Stav</span>
<svg class="i" style="left:1254.3px;top:469px;" width="8" height="7" viewBox="0 0 8 7"><path d="M0.6 0.6 H6.9 L3.75 5.6 Z" fill="none" stroke="#444" stroke-width="1.15" stroke-linecap="round" stroke-linejoin="round" /></svg>
<span class="t" style="left:1280.40px;top:463px;color:#666;letter-spacing:-0.074px;">Listinná podoba</span>
<svg class="i" style="left:1404px;top:469px;" width="8" height="7" viewBox="0 0 8 7"><path d="M0.6 0.6 H6.9 L3.75 5.6 Z" fill="none" stroke="#444" stroke-width="1.15" stroke-linecap="round" stroke-linejoin="round" /></svg>
<span class="t" style="left:1430.00px;top:463px;color:#666;letter-spacing:-0.272px;">Označen jako nepodaný</span>
<div class="rl" style="left:346px;top:513px;width:1222px;height:1px;"></div>
<svg class="i" style="left:357.95px;top:498.9px;" width="17" height="5" viewBox="0 0 17 5"><rect x="0.58" y="0.58" width="3.05" height="2.8" rx="1.2" fill="none" stroke="#1c75b4" stroke-width="1.15"/><rect x="6.45" y="0.58" width="3.05" height="2.8" rx="1.2" fill="none" stroke="#1c75b4" stroke-width="1.15"/><rect x="12.32" y="0.58" width="3.05" height="2.8" rx="1.2" fill="none" stroke="#1c75b4" stroke-width="1.15"/></svg>
<svg class="i" style="left:384px;top:492.6px;" width="16" height="16" viewBox="0 0 16 16"><circle cx="8" cy="8" r="7.3" fill="none" stroke="#1c75b4" stroke-width="1.1"/><circle cx="8.1" cy="4.4" r="0.8" fill="#1c75b4"/><path d="M7.2 6.9 H8.2 V11.2 Q8.3 11.6 9.2 11.4" fill="none" stroke="#1c75b4" stroke-width="1.1" stroke-linecap="round" stroke-linejoin="round" /></svg>
<span class="t" style="left:420.20px;top:492px;letter-spacing:-0.462px;">001</span>
<span class="t" style="left:500.30px;top:492px;letter-spacing:-0.122px;">Dodavatel - školení 2</span>
<span class="t" style="left:850.20px;top:492px;letter-spacing:0.048px;">12345678</span>
<span class="t" style="left:950.00px;top:492px;letter-spacing:-0.058px;">21. 5. 2025 19:47</span>
<span class="t" style="left:1100.20px;top:492px;letter-spacing:-0.186px;">Otevřeno</span>
<svg class="i" style="left:1342.4px;top:495px;" width="10" height="10" viewBox="0 0 10 10"><path d="M1.6 1.8 L8.4 8.2 M8.4 1.8 L1.6 8.2" fill="none" stroke="#cb2026" stroke-width="2.1" stroke-linecap="round" stroke-linejoin="round" stroke-linecap="butt"/></svg>
<svg class="i" style="left:1507.2px;top:495px;" width="10" height="10" viewBox="0 0 10 10"><path d="M1.6 1.8 L8.4 8.2 M8.4 1.8 L1.6 8.2" fill="none" stroke="#cb2026" stroke-width="2.1" stroke-linecap="round" stroke-linejoin="round" stroke-linecap="butt"/></svg>
<div class="rl" style="left:346px;top:538px;width:1222px;height:1px;"></div>
<svg class="i" style="left:357.95px;top:523.9px;" width="17" height="5" viewBox="0 0 17 5"><rect x="0.58" y="0.58" width="3.05" height="2.8" rx="1.2" fill="none" stroke="#1c75b4" stroke-width="1.15"/><rect x="6.45" y="0.58" width="3.05" height="2.8" rx="1.2" fill="none" stroke="#1c75b4" stroke-width="1.15"/><rect x="12.32" y="0.58" width="3.05" height="2.8" rx="1.2" fill="none" stroke="#1c75b4" stroke-width="1.15"/></svg>
<svg class="i" style="left:384px;top:517.6px;" width="16" height="16" viewBox="0 0 16 16"><circle cx="8" cy="8" r="7.3" fill="none" stroke="#1c75b4" stroke-width="1.1"/><circle cx="8.1" cy="4.4" r="0.8" fill="#1c75b4"/><path d="M7.2 6.9 H8.2 V11.2 Q8.3 11.6 9.2 11.4" fill="none" stroke="#1c75b4" stroke-width="1.1" stroke-linecap="round" stroke-linejoin="round" /></svg>
<span class="t" style="left:420.20px;top:517px;letter-spacing:-0.462px;">002</span>
<span class="t" style="left:500.30px;top:517px;letter-spacing:-0.122px;">Dodavatel - školení 3</span>
<span class="t" style="left:850.20px;top:517px;letter-spacing:0.048px;">12345678</span>
<span class="t" style="left:950.00px;top:517px;letter-spacing:-0.058px;">21. 5. 2025 19:49</span>
<span class="t" style="left:1100.20px;top:517px;letter-spacing:-0.186px;">Otevřeno</span>
<svg class="i" style="left:1342.4px;top:520px;" width="10" height="10" viewBox="0 0 10 10"><path d="M1.6 1.8 L8.4 8.2 M8.4 1.8 L1.6 8.2" fill="none" stroke="#cb2026" stroke-width="2.1" stroke-linecap="round" stroke-linejoin="round" stroke-linecap="butt"/></svg>
<svg class="i" style="left:1507.2px;top:520px;" width="10" height="10" viewBox="0 0 10 10"><path d="M1.6 1.8 L8.4 8.2 M8.4 1.8 L1.6 8.2" fill="none" stroke="#cb2026" stroke-width="2.1" stroke-linecap="round" stroke-linejoin="round" stroke-linecap="butt"/></svg>
<div class="rl" style="left:346px;top:563px;width:1222px;height:1px;"></div>
<svg class="i" style="left:357.95px;top:548.9px;" width="17" height="5" viewBox="0 0 17 5"><rect x="0.58" y="0.58" width="3.05" height="2.8" rx="1.2" fill="none" stroke="#1c75b4" stroke-width="1.15"/><rect x="6.45" y="0.58" width="3.05" height="2.8" rx="1.2" fill="none" stroke="#1c75b4" stroke-width="1.15"/><rect x="12.32" y="0.58" width="3.05" height="2.8" rx="1.2" fill="none" stroke="#1c75b4" stroke-width="1.15"/></svg>
<svg class="i" style="left:384px;top:542.6px;" width="16" height="16" viewBox="0 0 16 16"><circle cx="8" cy="8" r="7.3" fill="none" stroke="#1c75b4" stroke-width="1.1"/><circle cx="8.1" cy="4.4" r="0.8" fill="#1c75b4"/><path d="M7.2 6.9 H8.2 V11.2 Q8.3 11.6 9.2 11.4" fill="none" stroke="#1c75b4" stroke-width="1.1" stroke-linecap="round" stroke-linejoin="round" /></svg>
<span class="t" style="left:420.20px;top:542px;letter-spacing:-0.462px;">003</span>
<span class="t" style="left:500.30px;top:542px;letter-spacing:-0.122px;">Dodavatel - školení 5</span>
<span class="t" style="left:850.20px;top:542px;letter-spacing:0.048px;">12345678</span>
<span class="t" style="left:950.00px;top:542px;letter-spacing:-0.058px;">21. 5. 2025 19:51</span>
<span class="t" style="left:1100.20px;top:542px;letter-spacing:0.016px;">Vzata zpět</span>
<svg class="i" style="left:1342.4px;top:545px;" width="10" height="10" viewBox="0 0 10 10"><path d="M1.6 1.8 L8.4 8.2 M8.4 1.8 L1.6 8.2" fill="none" stroke="#cb2026" stroke-width="2.1" stroke-linecap="round" stroke-linejoin="round" stroke-linecap="butt"/></svg>
<svg class="i" style="left:1507.2px;top:545px;" width="10" height="10" viewBox="0 0 10 10"><path d="M1.6 1.8 L8.4 8.2 M8.4 1.8 L1.6 8.2" fill="none" stroke="#cb2026" stroke-width="2.1" stroke-linecap="round" stroke-linejoin="round" stroke-linecap="butt"/></svg>
<div class="rl" style="left:346px;top:588px;width:1222px;height:1px;"></div>
<svg class="i" style="left:357.95px;top:573.9px;" width="17" height="5" viewBox="0 0 17 5"><rect x="0.58" y="0.58" width="3.05" height="2.8" rx="1.2" fill="none" stroke="#1c75b4" stroke-width="1.15"/><rect x="6.45" y="0.58" width="3.05" height="2.8" rx="1.2" fill="none" stroke="#1c75b4" stroke-width="1.15"/><rect x="12.32" y="0.58" width="3.05" height="2.8" rx="1.2" fill="none" stroke="#1c75b4" stroke-width="1.15"/></svg>
<svg class="i" style="left:384px;top:567.6px;" width="16" height="16" viewBox="0 0 16 16"><circle cx="8" cy="8" r="7.3" fill="none" stroke="#1c75b4" stroke-width="1.1"/><circle cx="8.1" cy="4.4" r="0.8" fill="#1c75b4"/><path d="M7.2 6.9 H8.2 V11.2 Q8.3 11.6 9.2 11.4" fill="none" stroke="#1c75b4" stroke-width="1.1" stroke-linecap="round" stroke-linejoin="round" /></svg>
<span class="t" style="left:420.20px;top:567px;letter-spacing:-0.462px;">004</span>
<span class="t" style="left:500.30px;top:567px;letter-spacing:-0.122px;">Dodavatel - školení 5</span>
<span class="t" style="left:850.20px;top:567px;letter-spacing:0.048px;">12345678</span>
<span class="t" style="left:950.00px;top:567px;letter-spacing:-0.058px;">21. 5. 2025 19:51</span>
<span class="t" style="left:1100.20px;top:567px;letter-spacing:-0.186px;">Otevřeno</span>
<svg class="i" style="left:1342.4px;top:570px;" width="10" height="10" viewBox="0 0 10 10"><path d="M1.6 1.8 L8.4 8.2 M8.4 1.8 L1.6 8.2" fill="none" stroke="#cb2026" stroke-width="2.1" stroke-linecap="round" stroke-linejoin="round" stroke-linecap="butt"/></svg>
<svg class="i" style="left:1507.2px;top:570px;" width="10" height="10" viewBox="0 0 10 10"><path d="M1.6 1.8 L8.4 8.2 M8.4 1.8 L1.6 8.2" fill="none" stroke="#cb2026" stroke-width="2.1" stroke-linecap="round" stroke-linejoin="round" stroke-linecap="butt"/></svg>
<div class="rl" style="left:346px;top:613px;width:1222px;height:1px;"></div>
<svg class="i" style="left:357.95px;top:598.9px;" width="17" height="5" viewBox="0 0 17 5"><rect x="0.58" y="0.58" width="3.05" height="2.8" rx="1.2" fill="none" stroke="#1c75b4" stroke-width="1.15"/><rect x="6.45" y="0.58" width="3.05" height="2.8" rx="1.2" fill="none" stroke="#1c75b4" stroke-width="1.15"/><rect x="12.32" y="0.58" width="3.05" height="2.8" rx="1.2" fill="none" stroke="#1c75b4" stroke-width="1.15"/></svg>
<svg class="i" style="left:384px;top:592.6px;" width="16" height="16" viewBox="0 0 16 16"><circle cx="8" cy="8" r="7.3" fill="none" stroke="#1c75b4" stroke-width="1.1"/><circle cx="8.1" cy="4.4" r="0.8" fill="#1c75b4"/><path d="M7.2 6.9 H8.2 V11.2 Q8.3 11.6 9.2 11.4" fill="none" stroke="#1c75b4" stroke-width="1.1" stroke-linecap="round" stroke-linejoin="round" /></svg>
<span class="t" style="left:420.20px;top:592px;letter-spacing:-0.462px;">005</span>
<span class="t" style="left:500.30px;top:592px;letter-spacing:-0.122px;">Dodavatel - školení 6</span>
<span class="t" style="left:850.20px;top:592px;letter-spacing:0.048px;">45359326</span>
<span class="t" style="left:950.00px;top:592px;letter-spacing:-0.058px;">21. 5. 2025 19:53</span>
<span class="t" style="left:1100.20px;top:592px;letter-spacing:-0.186px;">Otevřeno</span>
<svg class="i" style="left:1342.4px;top:595px;" width="10" height="10" viewBox="0 0 10 10"><path d="M1.6 1.8 L8.4 8.2 M8.4 1.8 L1.6 8.2" fill="none" stroke="#cb2026" stroke-width="2.1" stroke-linecap="round" stroke-linejoin="round" stroke-linecap="butt"/></svg>
<svg class="i" style="left:1507.2px;top:595px;" width="10" height="10" viewBox="0 0 10 10"><path d="M1.6 1.8 L8.4 8.2 M8.4 1.8 L1.6 8.2" fill="none" stroke="#cb2026" stroke-width="2.1" stroke-linecap="round" stroke-linejoin="round" stroke-linecap="butt"/></svg>
<div style="left:346px;top:614px;width:1222px;height:24px;background:#c5daf5"></div>
<div class="rl" style="left:346px;top:638px;width:1222px;height:1px;"></div>
<svg class="i" style="left:357.95px;top:623.9px;" width="17" height="5" viewBox="0 0 17 5"><rect x="0.58" y="0.58" width="3.05" height="2.8" rx="1.2" fill="none" stroke="#1c75b4" stroke-width="1.15"/><rect x="6.45" y="0.58" width="3.05" height="2.8" rx="1.2" fill="none" stroke="#1c75b4" stroke-width="1.15"/><rect x="12.32" y="0.58" width="3.05" height="2.8" rx="1.2" fill="none" stroke="#1c75b4" stroke-width="1.15"/></svg>
<svg class="i" style="left:384px;top:617.6px;" width="16" height="16" viewBox="0 0 16 16"><circle cx="8" cy="8" r="7.3" fill="none" stroke="#1c75b4" stroke-width="1.1"/><circle cx="8.1" cy="4.4" r="0.8" fill="#1c75b4"/><path d="M7.2 6.9 H8.2 V11.2 Q8.3 11.6 9.2 11.4" fill="none" stroke="#1c75b4" stroke-width="1.1" stroke-linecap="round" stroke-linejoin="round" /></svg>
<span class="t" style="left:420.20px;top:617px;letter-spacing:-0.462px;">006</span>
<span class="t" style="left:500.30px;top:617px;letter-spacing:-0.122px;">Dodavatel - školení 7</span>
<span class="t" style="left:850.20px;top:617px;letter-spacing:0.048px;">12345678</span>
<span class="t" style="left:950.00px;top:617px;letter-spacing:-0.058px;">21. 5. 2025 19:55</span>
<span class="t" style="left:1100.20px;top:617px;letter-spacing:-0.186px;">Otevřeno</span>
<svg class="i" style="left:1342.4px;top:620px;" width="10" height="10" viewBox="0 0 10 10"><path d="M1.6 1.8 L8.4 8.2 M8.4 1.8 L1.6 8.2" fill="none" stroke="#cb2026" stroke-width="2.1" stroke-linecap="round" stroke-linejoin="round" stroke-linecap="butt"/></svg>
<svg class="i" style="left:1507.2px;top:620px;" width="10" height="10" viewBox="0 0 10 10"><path d="M1.6 1.8 L8.4 8.2 M8.4 1.8 L1.6 8.2" fill="none" stroke="#cb2026" stroke-width="2.1" stroke-linecap="round" stroke-linejoin="round" stroke-linecap="butt"/></svg>
<div class="rl" style="left:346px;top:663px;width:1222px;height:1px;"></div>
<svg class="i" style="left:357.95px;top:648.9px;" width="17" height="5" viewBox="0 0 17 5"><rect x="0.58" y="0.58" width="3.05" height="2.8" rx="1.2" fill="none" stroke="#1c75b4" stroke-width="1.15"/><rect x="6.45" y="0.58" width="3.05" height="2.8" rx="1.2" fill="none" stroke="#1c75b4" stroke-width="1.15"/><rect x="12.32" y="0.58" width="3.05" height="2.8" rx="1.2" fill="none" stroke="#1c75b4" stroke-width="1.15"/></svg>
<svg class="i" style="left:384px;top:642.6px;" width="16" height="16" viewBox="0 0 16 16"><circle cx="8" cy="8" r="7.3" fill="none" stroke="#1c75b4" stroke-width="1.1"/><circle cx="8.1" cy="4.4" r="0.8" fill="#1c75b4"/><path d="M7.2 6.9 H8.2 V11.2 Q8.3 11.6 9.2 11.4" fill="none" stroke="#1c75b4" stroke-width="1.1" stroke-linecap="round" stroke-linejoin="round" /></svg>
<span class="t" style="left:420.20px;top:642px;letter-spacing:-0.462px;">007</span>
<span class="t" style="left:500.30px;top:642px;letter-spacing:-0.122px;">Dodavatel - školení 8</span>
<span class="t" style="left:850.20px;top:642px;letter-spacing:0.048px;">12345678</span>
<span class="t" style="left:950.00px;top:642px;letter-spacing:-0.058px;">21. 5. 2025 19:57</span>
<span class="t" style="left:1100.20px;top:642px;letter-spacing:-0.186px;">Otevřeno</span>
<svg class="i" style="left:1342.4px;top:645px;" width="10" height="10" viewBox="0 0 10 10"><path d="M1.6 1.8 L8.4 8.2 M8.4 1.8 L1.6 8.2" fill="none" stroke="#cb2026" stroke-width="2.1" stroke-linecap="round" stroke-linejoin="round" stroke-linecap="butt"/></svg>
<svg class="i" style="left:1506.2px;top:645px;" width="12" height="10" viewBox="0 0 12 10"><path d="M1.5 5.4 L4.8 8.5 L10.4 1.8" fill="none" stroke="#2fae34" stroke-width="2.3" stroke-linecap="round" stroke-linejoin="round" stroke-linecap="butt"/></svg>
<div class="rl" style="left:346px;top:688px;width:1222px;height:1px;"></div>
<svg class="i" style="left:357.95px;top:673.9px;" width="17" height="5" viewBox="0 0 17 5"><rect x="0.58" y="0.58" width="3.05" height="2.8" rx="1.2" fill="none" stroke="#1c75b4" stroke-width="1.15"/><rect x="6.45" y="0.58" width="3.05" height="2.8" rx="1.2" fill="none" stroke="#1c75b4" stroke-width="1.15"/><rect x="12.32" y="0.58" width="3.05" height="2.8" rx="1.2" fill="none" stroke="#1c75b4" stroke-width="1.15"/></svg>
<svg class="i" style="left:384px;top:667.6px;" width="16" height="16" viewBox="0 0 16 16"><circle cx="8" cy="8" r="7.3" fill="none" stroke="#1c75b4" stroke-width="1.1"/><circle cx="8.1" cy="4.4" r="0.8" fill="#1c75b4"/><path d="M7.2 6.9 H8.2 V11.2 Q8.3 11.6 9.2 11.4" fill="none" stroke="#1c75b4" stroke-width="1.1" stroke-linecap="round" stroke-linejoin="round" /></svg>
<span class="t" style="left:420.20px;top:667px;letter-spacing:-0.462px;">008</span>
<span class="t" style="left:500.30px;top:667px;letter-spacing:-0.122px;">Dodavatel - školení 4</span>
<span class="t" style="left:850.20px;top:667px;letter-spacing:0.048px;">12345678</span>
<span class="t" style="left:950.00px;top:667px;letter-spacing:-0.058px;">21. 5. 2025 20:00</span>
<span class="t" style="left:1100.20px;top:667px;letter-spacing:-0.030px;">Podána po lhůtě</span>
<svg class="i" style="left:1342.4px;top:670px;" width="10" height="10" viewBox="0 0 10 10"><path d="M1.6 1.8 L8.4 8.2 M8.4 1.8 L1.6 8.2" fill="none" stroke="#cb2026" stroke-width="2.1" stroke-linecap="round" stroke-linejoin="round" stroke-linecap="butt"/></svg>
<svg class="i" style="left:1507.2px;top:670px;" width="10" height="10" viewBox="0 0 10 10"><path d="M1.6 1.8 L8.4 8.2 M8.4 1.8 L1.6 8.2" fill="none" stroke="#cb2026" stroke-width="2.1" stroke-linecap="round" stroke-linejoin="round" stroke-linecap="butt"/></svg>
<svg class="i" style="left:357.95px;top:698.9px;" width="17" height="5" viewBox="0 0 17 5"><rect x="0.58" y="0.58" width="3.05" height="2.8" rx="1.2" fill="none" stroke="#1c75b4" stroke-width="1.15"/><rect x="6.45" y="0.58" width="3.05" height="2.8" rx="1.2" fill="none" stroke="#1c75b4" stroke-width="1.15"/><rect x="12.32" y="0.58" width="3.05" height="2.8" rx="1.2" fill="none" stroke="#1c75b4" stroke-width="1.15"/></svg>
<svg class="i" style="left:384px;top:692.6px;" width="16" height="16" viewBox="0 0 16 16"><circle cx="8" cy="8" r="7.3" fill="none" stroke="#1c75b4" stroke-width="1.1"/><circle cx="8.1" cy="4.4" r="0.8" fill="#1c75b4"/><path d="M7.2 6.9 H8.2 V11.2 Q8.3 11.6 9.2 11.4" fill="none" stroke="#1c75b4" stroke-width="1.1" stroke-linecap="round" stroke-linejoin="round" /></svg>
<span class="t" style="left:420.20px;top:692px;letter-spacing:-0.462px;">009</span>
<span class="t" style="left:500.30px;top:692px;letter-spacing:-0.122px;">Dodavatel - školení 6</span>
<span class="t" style="left:850.20px;top:692px;letter-spacing:0.048px;">45359326</span>
<span class="t" style="left:950.00px;top:692px;letter-spacing:-0.058px;">21. 5. 2025 19:59</span>
<span class="t" style="left:1100.20px;top:692px;letter-spacing:-0.186px;">Otevřeno</span>
<svg class="i" style="left:1341.4px;top:695px;" width="12" height="10" viewBox="0 0 12 10"><path d="M1.5 5.4 L4.8 8.5 L10.4 1.8" fill="none" stroke="#2fae34" stroke-width="2.3" stroke-linecap="round" stroke-linejoin="round" stroke-linecap="butt"/></svg>
<svg class="i" style="left:1507.2px;top:695px;" width="10" height="10" viewBox="0 0 10 10"><path d="M1.6 1.8 L8.4 8.2 M8.4 1.8 L1.6 8.2" fill="none" stroke="#cb2026" stroke-width="2.1" stroke-linecap="round" stroke-linejoin="round" stroke-linecap="butt"/></svg>
<div style="left:1518px;top:456px;width:50px;height:257px;border-bottom-right-radius:8px;background:linear-gradient(to right,rgba(0,0,0,0) 0%,rgba(0,0,0,.015) 35%,rgba(0,0,0,.05) 70%,rgba(0,0,0,.13) 100%)"></div>
<svg class="i" style="left:343.4px;top:412.8px;pointer-events:none" width="1227.4" height="303.1" viewBox="0 0 1227.4 303.1"><rect x="1.375" y="1.375" width="1224.65" height="300.35" rx="9.5" fill="none" stroke="#dcdddf" stroke-width="2.75"/></svg>
</section>
<section class="zadost-o-ucast">
<div class="panel p2" style="left:328px;top:747px;width:1258px;height:398px;"></div>
<div style="left:336px;top:754px;width:127px;height:32px;border:1px solid #e8001c"></div>
<h2 class="t" style="left:340.20px;top:762px;font-size:18px;font-weight:700;color:#2f343e;letter-spacing:-0.704px;">Žádost o účast</h2>
<div style="left:328px;top:788px;width:1258px;height:3px;background:#1c75b4"></div>
<span class="t" style="left:721.40px;top:810px;font-size:15px;font-weight:700;color:#cb2026;">*</span>
<label class="t" style="left:730.00px;top:810px;color:#555;letter-spacing:0.065px;">Lhůta:</label>
<div class="fld" style="left:776px;top:811px;width:224px;height:21px;background:#fdf6bf;border-color:#e6dfa6"></div>
<div style="left:879px;top:813px;width:18px;height:17px;background:#c2d8f6;border-radius:4px"></div>
<svg class="i" style="left:882px;top:815px;" width="13" height="12" viewBox="0 0 13 12"><path d="M1.6 1.6 H10.9 a1 1 0 0 1 1 1 V10.4 a1 1 0 0 1 -1 1 H1.6 a1 1 0 0 1 -1 -1 V2.6 a1 1 0 0 1 1 -1 Z M0.6 4.4 H11.9 M3.6 0.4 V2.6 M8.9 0.4 V2.6" fill="none" stroke="#1c75b4" stroke-width="1.3" stroke-linecap="round" stroke-linejoin="round" /></svg>
<div style="left:1010px;top:811px;width:204px;height:20px;background:#fff;border:1px solid #d6d6d6;border-radius:6px;box-shadow:0 1px 1px rgba(0,0,0,.06)"></div>
<a class="t" style="left:1077.00px;top:812px;color:#1c75b4;letter-spacing:-0.070px;">Výpočet lhůt</a>
<label class="t" style="left:639.50px;top:851px;color:#555;letter-spacing:-0.181px;">Datum a čas otevírání:</label>
<div class="fld" style="left:776px;top:852px;width:438px;height:21px;"></div>
<svg class="i" style="left:989px;top:856px;" width="13" height="12" viewBox="0 0 13 12"><path d="M1.6 1.6 H10.9 a1 1 0 0 1 1 1 V10.4 a1 1 0 0 1 -1 1 H1.6 a1 1 0 0 1 -1 -1 V2.6 a1 1 0 0 1 1 -1 Z M0.6 4.4 H11.9 M3.6 0.4 V2.6 M8.9 0.4 V2.6" fill="none" stroke="#808080" stroke-width="0.95" stroke-linecap="round" stroke-linejoin="round" /></svg>
<div class="btnd" style="left:776px;top:893px;width:438px;height:21px;"></div>
<span class="t" style="left:870.00px;top:895px;color:#9a9a9a;letter-spacing:-0.278px;">Odeslání výzvy k podání žádosti o účast v ZŘ</span>
<h3 class="t" style="left:343.40px;top:935px;font-size:14.5px;font-weight:700;color:#2f343e;letter-spacing:0.094px;">Přehled podaných žádostí o účast</h3>
<div class="gh" style="left:346px;top:1001px;width:1222px;height:38px;"></div>
<svg class="i" style="left:353.7px;top:974.3px;" width="17" height="17" viewBox="0 0 17 17"><path d="M4.8 3.2 H1.8 a1 1 0 0 0 -1 1 V14.4 a1 1 0 0 0 1 1 H6.6 M9.4 3.2 H12.2 a1 1 0 0 1 1 1 V5.6" fill="none" stroke="#a9a9a9" stroke-width="1.1" stroke-linecap="round" stroke-linejoin="round" /><path d="M3.9 4.2 H4.9 Q4.7 0.6 7.1 0.6 Q9.5 0.6 9.3 4.2 H10.3" fill="none" stroke="#a9a9a9" stroke-width="1.1" stroke-linecap="round" stroke-linejoin="round" /><circle cx="7.1" cy="2.6" r="0.55" fill="#a9a9a9"/><path d="M3.6 6.9 H6.8" fill="none" stroke="#a9a9a9" stroke-width="1.3" stroke-linecap="round" stroke-linejoin="round" stroke-linecap="butt"/><path d="M3.6 9.5 H5.8 M3.6 12 H5.6" fill="none" stroke="#a9a9a9" stroke-width="1.2" stroke-linecap="round" stroke-linejoin="round" stroke-linecap="butt"/><path d="M11.70 6.70 L13.05 8.66 L15.42 8.85 L14.40 11.00 L15.42 13.15 L13.05 13.34 L11.70 15.30 L10.35 13.34 L7.98 13.15 L9.00 11.00 L7.98 8.85 L10.35 8.66 Z" fill="none" stroke="#a9a9a9" stroke-width="1.0" stroke-linecap="round" stroke-linejoin="round" /><circle cx="11.7" cy="11" r="1.1" fill="#a9a9a9"/></svg>
<span class="t" style="left:374.00px;top:973px;color:#a6a6a6;letter-spacing:-0.129px;">Evidovat žádost o účast</span>
<div class="sep" style="left:515px;top:973px;width:1.2px;height:18px;"></div>
<svg class="i" style="left:523.6px;top:974.3px;" width="16" height="16" viewBox="0 0 16 16"><path d="M3.5 4.6 V0.6 H12.7 V4.6" fill="none" stroke="#1c75b4" stroke-width="1.1" stroke-linecap="round" stroke-linejoin="round" /><path d="M3.5 11.4 H1.6 a1 1 0 0 1 -1 -1 V5.6 a1 1 0 0 1 1 -1 H14.6 a1 1 0 0 1 1 1 V10.4 a1 1 0 0 1 -1 1 H12.7" fill="none" stroke="#1c75b4" stroke-width="1.1" stroke-linecap="round" stroke-linejoin="round" /><path d="M3.5 8.6 H12.7 V15.4 H3.5 Z" fill="none" stroke="#1c75b4" stroke-width="1.1" stroke-linecap="round" stroke-linejoin="round" /><path d="M5.6 10.6 H10.6 M5.6 12.7 H9.2" fill="none" stroke="#1c75b4" stroke-width="0.9" stroke-linecap="round" stroke-linejoin="round" stroke-linecap="butt"/><path d="M2.6 6.4 H3.6" fill="none" stroke="#1c75b4" stroke-width="1.1" stroke-linecap="round" stroke-linejoin="round" /></svg>
<svg class="i" style="left:543.5px;top:979px;" width="8" height="7" viewBox="0 0 8 7"><path d="M0.6 0.6 H6.9 L3.75 5.6 Z" fill="none" stroke="#1c75b4" stroke-width="1.15" stroke-linecap="round" stroke-linejoin="round" /></svg>
<div class="sep" style="left:562px;top:973px;width:1.2px;height:18px;"></div>
<svg class="i" style="left:573.3px;top:973.8px;" width="14" height="17" viewBox="0 0 14 17"><path d="M3.2 5.9 H1.8 a1.2 1.2 0 0 0 -1.2 1.2 V14.6 a1.2 1.2 0 0 0 1.2 1.2 H11.4 a1.2 1.2 0 0 0 1.2 -1.2 V7.1 a1.2 1.2 0 0 0 -1.2 -1.2 H10.2" fill="none" stroke="#1c75b4" stroke-width="1.1" stroke-linecap="round" stroke-linejoin="round" /><path d="M6.6 0.7 V7.8 M4 3.2 L6.6 0.6 L9.2 3.2" fill="none" stroke="#1c75b4" stroke-width="1.1" stroke-linecap="round" stroke-linejoin="round" /></svg>
<svg class="i" style="left:591.4px;top:979px;" width="8" height="7" viewBox="0 0 8 7"><path d="M0.6 0.6 H6.9 L3.75 5.6 Z" fill="none" stroke="#1c75b4" stroke-width="1.15" stroke-linecap="round" stroke-linejoin="round" /></svg>
<div class="sep" style="left:610px;top:973px;width:1.2px;height:18px;"></div>
<svg class="i" style="left:1485.9px;top:974px;" width="17" height="17" viewBox="0 0 17 17"><path d="M1.4 0.6 H14.9 a0.8 0.8 0 0 1 0.8 0.9 Q15.2 6 10.2 8 V13.6 L6.4 15.8 V8 Q1.2 6 0.6 1.5 a0.8 0.8 0 0 1 0.8 -0.9 Z" fill="none" stroke="#1c75b4" stroke-width="1.1" stroke-linecap="round" stroke-linejoin="round" /></svg>
<div class="sep" style="left:1509px;top:973px;width:1.2px;height:18px;"></div>
<svg class="i" style="left:1522px;top:979px;" width="8" height="7" viewBox="0 0 8 7"><path d="M0.6 0.6 H6.9 L3.75 5.6 Z" fill="none" stroke="#1c75b4" stroke-width="1.15" stroke-linecap="round" stroke-linejoin="round" /></svg>
<a class="t" style="left:1538.30px;top:975px;color:#1c75b4;letter-spacing:-0.629px;">MW</a>
<div class="sep" style="left:1567px;top:973px;width:1.2px;height:18px;"></div>
<svg class="i" style="left:362px;top:1012px;" width="17" height="16" viewBox="0 0 17 16"><rect x="0.5" y="0.5" width="15" height="14.8" rx="0.8" fill="none" stroke="#505050" stroke-width="1"/><path d="M3.2 5.5 H9.4 M12.6 5.5 H13" fill="none" stroke="#505050" stroke-width="0.9" stroke-linecap="round" stroke-linejoin="round" /><circle cx="11" cy="5.5" r="1.4" fill="none" stroke="#505050" stroke-width="0.9"/><path d="M3.2 10.5 H5.6 M8.6 10.5 H13" fill="none" stroke="#505050" stroke-width="0.9" stroke-linecap="round" stroke-linejoin="round" /><circle cx="7.1" cy="10.5" r="1.4" fill="none" stroke="#505050" stroke-width="0.9"/></svg>
<div class="cs" style="left:393.0px;top:1002px;width:1px;height:36px;"></div>
<div class="cs" style="left:473.0px;top:1002px;width:1px;height:36px;"></div>
<div class="cs" style="left:823.0px;top:1002px;width:1px;height:36px;"></div>
<div class="cs" style="left:923.0px;top:1002px;width:1px;height:36px;"></div>
<div class="cs" style="left:1073.0px;top:1002px;width:1px;height:36px;"></div>
<div class="cs" style="left:1223.0px;top:1002px;width:1px;height:36px;"></div>
<div class="cs" style="left:1363.0px;top:1002px;width:1px;height:36px;"></div>
<div class="cs" style="left:1503.0px;top:1002px;width:1px;height:36px;"></div>
<span class="t" style="left:402.20px;top:1009px;color:#666;letter-spacing:-0.261px;">Číslo</span>
<svg class="i" style="left:456.6px;top:1015px;" width="8" height="7" viewBox="0 0 8 7"><path d="M0.6 0.6 H6.9 L3.75 5.6 Z" fill="none" stroke="#444" stroke-width="1.15" stroke-linecap="round" stroke-linejoin="round" /></svg>
<span class="t" style="left:482.30px;top:1009px;font-weight:700;letter-spacing:-0.515px;">Název dodavatele</span>
<svg class="i" style="left:590px;top:1011.6px;" width="13" height="12" viewBox="0 0 13 12"><path d="M6 0.7 V11.2 M0.7 5.9 L6 0.6 L11.3 5.9" fill="none" stroke="#111" stroke-width="1.2" stroke-linecap="round" stroke-linejoin="round" /></svg>
<svg class="i" style="left:805.8px;top:1015px;" width="8" height="7" viewBox="0 0 8 7"><path d="M0.6 0.6 H6.9 L3.75 5.6 Z" fill="none" stroke="#444" stroke-width="1.15" stroke-linecap="round" stroke-linejoin="round" /></svg>
<span class="t" style="left:831.80px;top:1009px;color:#666;letter-spacing:-1.173px;">IČO</span>
<svg class="i" style="left:906.6px;top:1015px;" width="8" height="7" viewBox="0 0 8 7"><path d="M0.6 0.6 H6.9 L3.75 5.6 Z" fill="none" stroke="#444" stroke-width="1.15" stroke-linecap="round" stroke-linejoin="round" /></svg>
<span class="t" style="left:932.00px;top:1009px;color:#666;letter-spacing:-0.172px;">Datum podání</span>
<svg class="i" style="left:1056px;top:1015px;" width="8" height="7" viewBox="0 0 8 7"><path d="M0.6 0.6 H6.9 L3.75 5.6 Z" fill="none" stroke="#444" stroke-width="1.15" stroke-linecap="round" stroke-linejoin="round" /></svg>
<span class="t" style="left:1082.00px;top:1009px;color:#666;letter-spacing:-0.212px;">Stav</span>
<svg class="i" style="left:1206px;top:1015px;" width="8" height="7" viewBox="0 0 8 7"><path d="M0.6 0.6 H6.9 L3.75 5.6 Z" fill="none" stroke="#444" stroke-width="1.15" stroke-linecap="round" stroke-linejoin="round" /></svg>
<span class="t" style="left:1232.00px;top:1009px;color:#666;letter-spacing:-0.250px;">Podepsána</span>
<svg class="i" style="left:1346.3px;top:1015px;" width="8" height="7" viewBox="0 0 8 7"><path d="M0.6 0.6 H6.9 L3.75 5.6 Z" fill="none" stroke="#444" stroke-width="1.15" stroke-linecap="round" stroke-linejoin="round" /></svg>
<span class="t" style="left:1372.30px;top:1009px;color:#666;letter-spacing:-0.095px;">Listinná podoba</span>
<svg class="i" style="left:1486.5px;top:1015px;" width="8" height="7" viewBox="0 0 8 7"><path d="M0.6 0.6 H6.9 L3.75 5.6 Z" fill="none" stroke="#444" stroke-width="1.15" stroke-linecap="round" stroke-linejoin="round" /></svg>
<div style="left:1504px;top:1002px;width:64px;height:36px;overflow:hidden">
<span class="t" style="left:8.20px;top:7px;color:#666;letter-spacing:-0.315px;">Označena jako nepodaná</span>
</div>
<svg class="i" style="left:982.4px;top:1065.5px;" width="26" height="11" viewBox="0 0 26 11"><path d="M2 1.1 H7.6 Q8.8 3.9 12.6 3.9 Q16.4 3.9 17.6 1.1 H23.2 a1.1 1.1 0 0 1 1.1 1.1 V8.1 a1.1 1.1 0 0 1 -1.1 1.1 H2 a1.1 1.1 0 0 1 -1.1 -1.1 V2.2 a1.1 1.1 0 0 1 1.1 -1.1 Z" fill="none" stroke="#5a5a5a" stroke-width="1.6" stroke-linecap="round" stroke-linejoin="round" /></svg>
<span class="t" style="left:860.20px;top:1086px;color:#555;letter-spacing:-0.100px;">Žádné záznamy. Nebyla učiněna žádná podání.</span>
<svg class="i" style="left:343.4px;top:958.9px;pointer-events:none" width="1227.4" height="165.5" viewBox="0 0 1227.4 165.5"><rect x="1.375" y="1.375" width="1224.65" height="162.75" rx="9.5" fill="none" stroke="#dcdddf" stroke-width="2.75"/></svg>
</section>
</main>
</body></html>
